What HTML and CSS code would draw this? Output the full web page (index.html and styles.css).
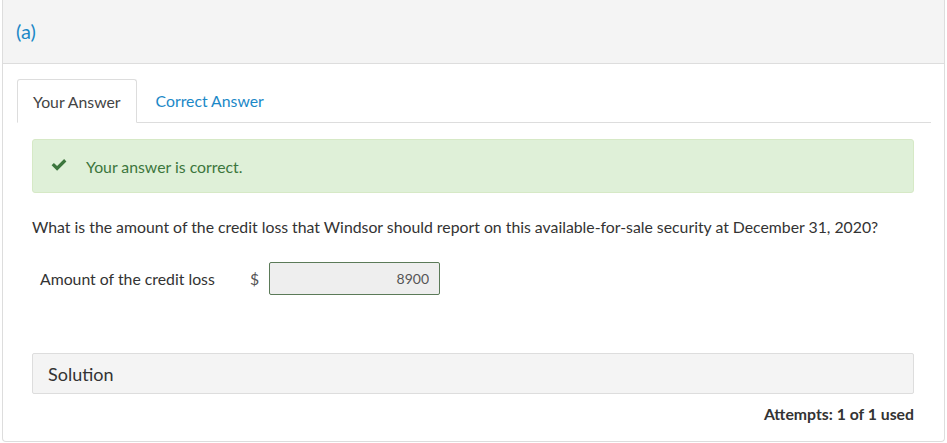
FILE: index.html
```html
<!DOCTYPE html>
<html lang="en">
<head>
    <meta charset="UTF-8">
    <title>Question (a)</title>
    <link rel="stylesheet" href="styles.css">
</head>
<body>
    <div class="panel">
        <div class="panel-heading">(a)</div>

        <div class="panel-body">
            <ul class="tabs">
                <li class="tab active">Your Answer</li>
                <li class="tab"><a href="#">Correct Answer</a></li>
            </ul>

            <div class="tab-content">
                <div class="alert-success">
                    <svg class="check" viewBox="0 0 16 12" width="16" height="12">
                        <path d="M0.6 6.2 L2.9 3.9 L6.1 7.1 L13.1 0.1 L15.4 2.4 L6.1 11.7 Z" fill="#3c763d"/>
                    </svg>
                    <span>Your answer is correct.</span>
                </div>

                <p class="question">What is the amount of the credit loss that Windsor should report on this available-for-sale security at December 31, 2020?</p>

                <div class="answer-row">
                    <span class="answer-label">Amount of the credit loss</span>
                    <span class="currency">$</span>
                    <input class="answer-input" type="text" value="8900" readonly>
                </div>

                <div class="solution">Solution</div>

                <div class="attempts">Attempts: 1 of 1 used</div>
            </div>
        </div>
    </div>
</body>
</html>
```

FILE: styles.css
```css
body {
    margin: 0;
    padding: 0;
    font-family: Lato, "Open Sans", sans-serif;
    color: #333;
    background-color: #fff;
}

.panel {
    margin: 0 2px;
    height: 442px;
    box-sizing: border-box;
    border: 1px solid #ddd;
    border-top: none;
    border-radius: 0 0 4px 4px;
}

.panel-heading {
    height: 64px;
    box-sizing: border-box;
    padding: 19px 13px 0;
    background-color: #f4f4f4;
    border-bottom: 1px solid #ddd;
    color: #1b88c7;
    font-size: 20px;
}

.panel-body {
    padding: 15px 13px 0 14px;
}

.tabs {
    display: flex;
    margin: 0;
    padding: 0;
    list-style: none;
    border-bottom: 1px solid #ddd;
}

.tab {
    height: 42px;
    box-sizing: border-box;
    padding: 0 15px;
    margin-right: 3px;
    margin-bottom: -1px;
    display: flex;
    align-items: center;
    font-size: 15.8px;
    border: 1px solid transparent;
    border-radius: 3px 3px 0 0;
}

.tab.active {
    height: 44px;
    border-color: #ddd;
    border-bottom-color: #fff;
    background-color: #fff;
    color: #444;
}

.tab a {
    color: #1b88c7;
    text-decoration: none;
}

.tab-content {
    padding: 16px 17px 0 15px;
}

.alert-success {
    height: 54px;
    box-sizing: border-box;
    display: flex;
    align-items: center;
    padding: 0 0 0 18px;
    background-color: #dff0d8;
    border: 1px solid #d6e9c6;
    border-radius: 3px;
    color: #3c763d;
    font-size: 15.8px;
}

.check {
    margin-right: 19px;
    margin-top: -3px;
}

.question {
    margin: 24px 0 0;
    font-size: 15.8px;
    line-height: 20px;
    color: #333;
}

.answer-row {
    display: flex;
    align-items: center;
    margin-top: 25px;
    padding-left: 8px;
    font-size: 15.8px;
}

.answer-label {
    width: 210px;
    color: #333;
}

.currency {
    width: 19px;
    color: #555;
}

.answer-input {
    width: 171px;
    height: 33px;
    box-sizing: border-box;
    padding: 0 10px;
    border: 1px solid #5b7a58;
    border-radius: 2px;
    background-color: #eee;
    color: #555;
    text-align: right;
    font-family: Lato, "Open Sans", sans-serif;
    font-size: 14px;
}

.solution {
    margin-top: 58px;
    height: 41px;
    box-sizing: border-box;
    display: flex;
    align-items: center;
    padding-left: 15px;
    background-color: #f4f4f4;
    border: 1px solid #ddd;
    border-radius: 2px;
    font-size: 18px;
    color: #333;
}

.attempts {
    margin-top: 10px;
    text-align: right;
    font-size: 15.8px;
    font-weight: bold;
    color: #333;
}
```
